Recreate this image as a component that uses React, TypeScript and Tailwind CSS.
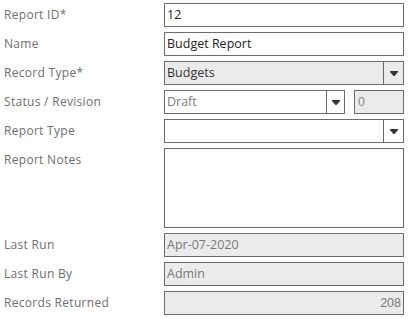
import React from "react";

const Arrow: React.FC = () => (
  <svg width="8" height="5" viewBox="0 0 8 5" className="block">
    <path d="M0 0H8V1L4.5 5H3.5L0 1Z" fill="#333" />
  </svg>
);

const labelCls = "pl-[4px] h-[24px] leading-[24px] text-[12px] tracking-[0.3px] text-[#6e6e6e]";
const boxCls = "h-[24px] border border-[#6b6b6b] px-[2px] text-[12.5px] leading-[22px]";

const Row: React.FC<{ label: string; children: React.ReactNode }> = ({ label, children }) => (
  <div className="flex">
    <div className={`w-[164px] shrink-0 ${labelCls}`}>{label}</div>
    <div className="w-[240px]">{children}</div>
  </div>
);

const Select: React.FC<{ value: string; disabled?: boolean; dim?: boolean; btnW?: string }> = ({
  value,
  disabled,
  dim,
  btnW = "w-[20px]",
}) => (
  <div
    className={`flex h-[24px] border border-[#6b6b6b] ${disabled ? "bg-[#ebebeb]" : "bg-white"}`}
  >
    <div
      className={`flex-1 px-[2px] text-[12.5px] leading-[22px] ${dim ? "text-[#7a7a7a]" : "text-[#333]"}`}
    >
      {value}
    </div>
    <div className={`${btnW} flex items-center justify-center border-l border-[#6b6b6b]`}>
      <Arrow />
    </div>
  </div>
);

export default function App() {
  return (
    <div
      className="w-[411px] h-[319px] bg-white pt-[3px] flex flex-col gap-[5px]"
      style={{ fontFamily: '"Open Sans", sans-serif' }}
    >
      <Row label="Report ID*">
        <div className={`${boxCls} text-[#222]`}>12</div>
      </Row>
      <Row label="Name">
        <div className={`${boxCls} text-[#222]`}>Budget Report</div>
      </Row>
      <Row label="Record Type*">
        <Select value="Budgets" disabled />
      </Row>
      <Row label="Status / Revision">
        <div className="flex gap-[9px]">
          <div className="w-[181px]">
            <Select value="Draft" dim btnW="w-[18px]" />
          </div>
          <div
            className="flex-1 h-[24px] border border-[#6b6b6b] bg-[#ebebeb] px-[3px] text-[12.5px] leading-[22px] text-[#888]"
            style={{ fontFamily: '"Liberation Sans", Arial, sans-serif' }}
          >
            0
          </div>
        </div>
      </Row>
      <Row label="Report Type">
        <Select value="" />
      </Row>
      <div className="flex">
        <div className={`w-[164px] shrink-0 ${labelCls}`}>Report Notes</div>
        <div className="w-[240px] h-[80px] border border-[#6b6b6b]" />
      </div>
      <Row label="Last Run">
        <div className={`${boxCls} bg-[#ebebeb] text-[#777]`}>Apr-07-2020</div>
      </Row>
      <Row label="Last Run By">
        <div className={`${boxCls} bg-[#ebebeb] text-[#777]`}>Admin</div>
      </Row>
      <Row label="Records Returned">
        <div
          className={`${boxCls} bg-[#ebebeb] text-[#777] text-right`}
          style={{ fontFamily: '"Liberation Sans", Arial, sans-serif' }}
        >
          208
        </div>
      </Row>
    </div>
  );
}
